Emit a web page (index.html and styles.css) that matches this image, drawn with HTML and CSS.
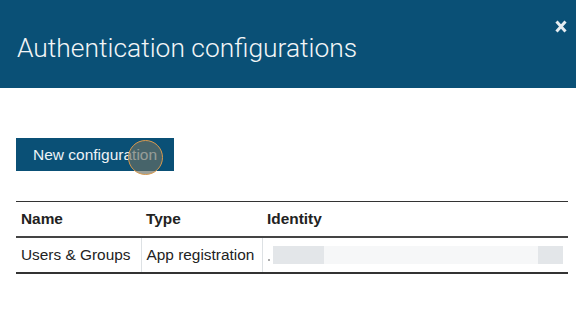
FILE: index.html
```html
<!DOCTYPE html>
<html lang="en">
<head>
    <meta charset="UTF-8">
    <meta name="viewport" content="width=device-width, initial-scale=1.0">
    <title>Authentication configurations</title>
    <link rel="stylesheet" href="styles.css">
</head>
<body>
    <header class="modal-header">
        <h1 class="modal-title">Authentication configurations</h1>
        <a href="#" class="close-button" aria-label="Close">
            <svg width="12" height="13" viewBox="0 0 12 13">
                <path d="M1.5 1.5 L10.5 11.5 M10.5 1.5 L1.5 11.5" stroke="currentColor" stroke-width="3" stroke-linecap="butt"/>
            </svg>
        </a>
    </header>

    <main class="modal-body">
        <div class="toolbar">
            <button class="primary-button">
                New configuration
                <span class="click-marker"></span>
            </button>
        </div>

        <table class="config-table">
            <thead>
                <tr>
                    <th class="col-name">Name</th>
                    <th class="col-type">Type</th>
                    <th>Identity</th>
                </tr>
            </thead>
            <tbody>
                <tr>
                    <td>Users &amp; Groups</td>
                    <td>App registration</td>
                    <td class="identity">
                        <span class="redacted">
                            <span class="redacted-dot"></span>
                            <span class="redacted-block"></span>
                            <span class="redacted-faint"></span>
                            <span class="redacted-block small"></span>
                        </span>
                    </td>
                </tr>
            </tbody>
        </table>
    </main>
</body>
</html>
```

FILE: styles.css
```css
* {
    margin: 0;
    padding: 0;
    box-sizing: border-box;
}

body {
    font-family: "Liberation Sans", Arial, sans-serif;
    color: #222;
    background-color: #fff;
}

.modal-header {
    display: flex;
    justify-content: space-between;
    align-items: flex-start;
    height: 88px;
    padding: 0 9px 0 17px;
    background-color: #0a5076;
}

.modal-title {
    margin-top: 33px;
    font-family: Roboto, "Liberation Sans", sans-serif;
    font-weight: 300;
    font-size: 26.4px;
    line-height: 30px;
    color: #f2f5f7;
}

.close-button {
    display: block;
    margin-top: 20px;
    color: #e6edf1;
}

.close-button svg {
    display: block;
}

.modal-body {
    padding: 50px 8px 0 16px;
}

.toolbar {
    display: flex;
}

.primary-button {
    position: relative;
    height: 33px;
    padding: 0 17px;
    border: none;
    background-color: #0a5076;
    color: #eef3f6;
    font-family: "Liberation Sans", Arial, sans-serif;
    font-size: 15.5px;
    cursor: pointer;
}

.click-marker {
    position: absolute;
    left: 112px;
    top: 2px;
    width: 35px;
    height: 35px;
    border-radius: 50%;
    border: 1.5px solid #d99a4e;
    background-color: rgba(105, 110, 100, 0.65);
}

.config-table {
    width: 100%;
    margin-top: 30px;
    border-collapse: collapse;
    font-size: 15.4px;
    line-height: 18px;
}

.config-table th,
.config-table td {
    text-align: left;
    padding: 8px 5px;
    white-space: nowrap;
}

.config-table thead tr {
    border-top: 1px solid #333;
    border-bottom: 2px solid #444;
}

.config-table th {
    font-weight: bold;
}

.col-name {
    width: 125px;
}

.col-type {
    width: 121px;
}

.config-table tbody tr {
    border-bottom: 2px solid #333;
}

.config-table td + td {
    border-left: 1px solid #dde1e4;
}

.identity {
    padding-right: 10px;
}

.redacted {
    display: flex;
    align-items: center;
    height: 18px;
}

.redacted-dot {
    width: 2px;
    height: 2px;
    margin-top: 10px;
    background-color: #aaa;
}

.redacted-block {
    width: 51px;
    height: 18px;
    margin-left: 3px;
    background-color: #e3e6e9;
}

.redacted-block.small {
    width: 25px;
    margin-left: 0;
}

.redacted-faint {
    flex: 1;
    height: 18px;
    background-color: #f6f7f8;
}
```
